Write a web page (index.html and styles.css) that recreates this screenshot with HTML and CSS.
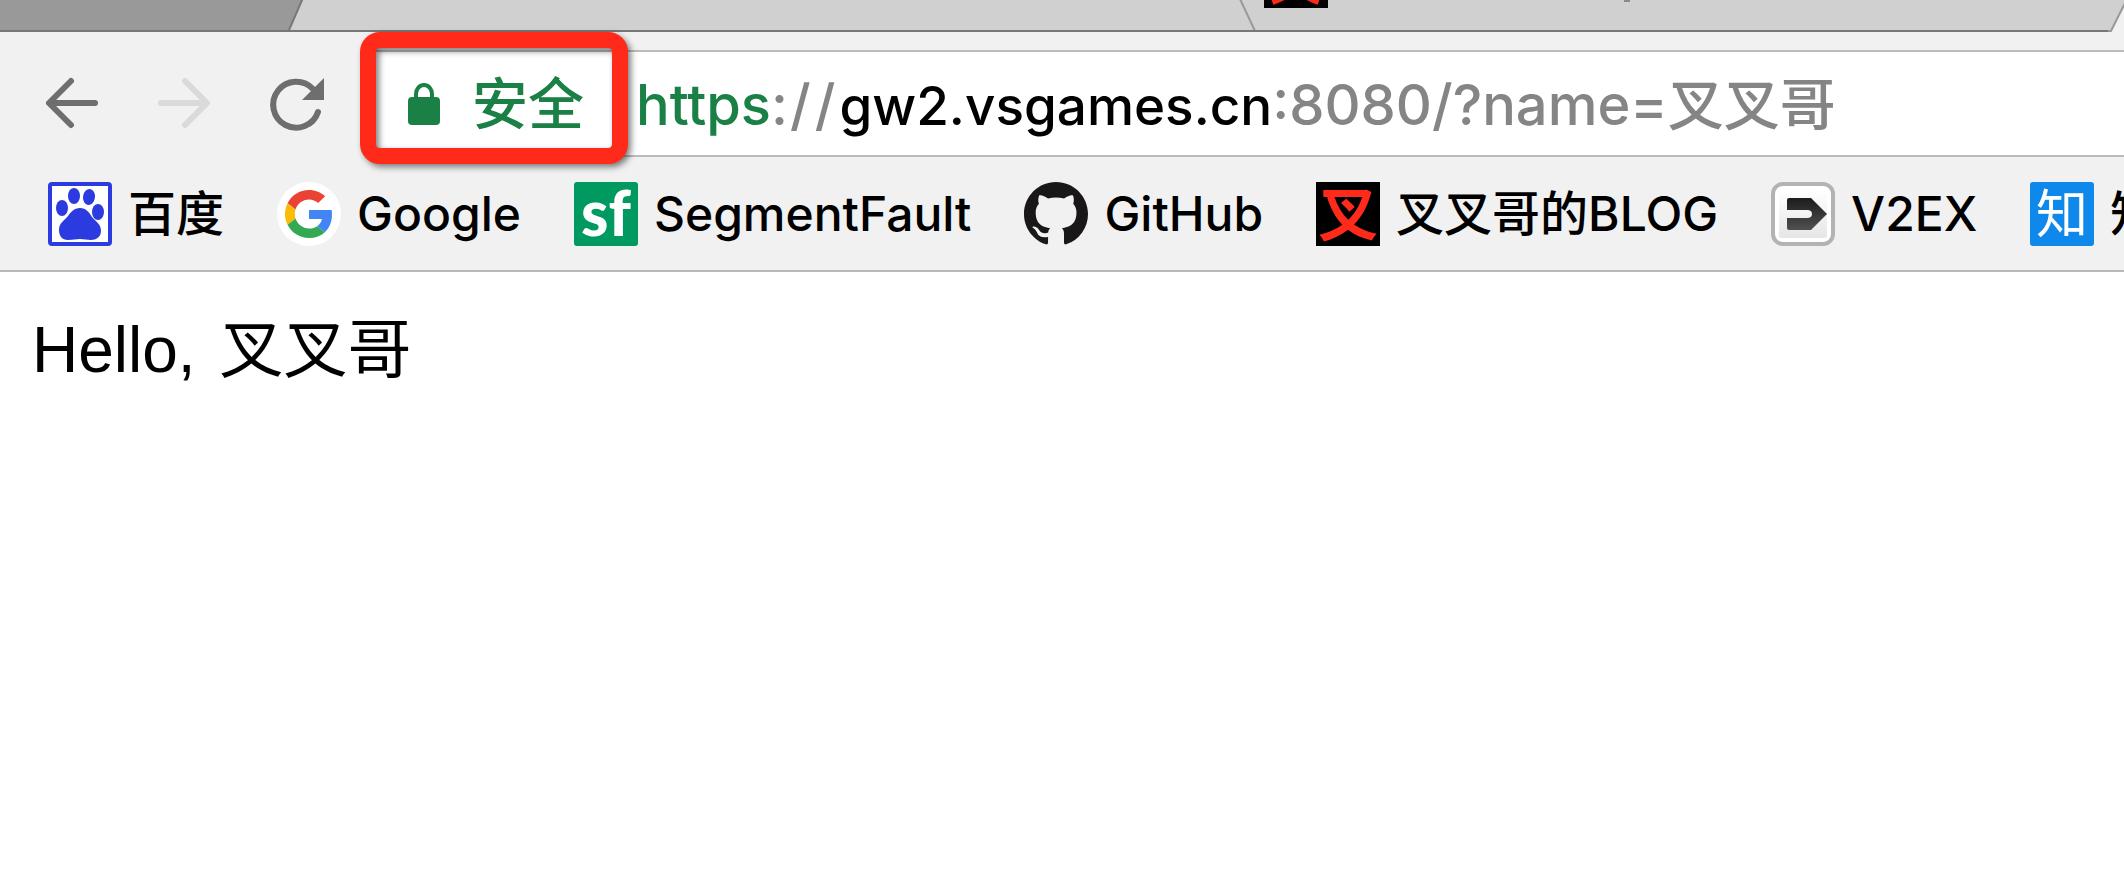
FILE: index.html
```html
<!DOCTYPE html>
<html lang="zh-CN">
<head>
<meta charset="utf-8">
<title>Hello, 叉叉哥</title>
<link rel="stylesheet" href="styles.css">
</head>
<body>
<header class="browser">
  <div class="tabs">
    <div class="tab tab-dark"></div>
    <svg class="edge" width="16" height="32" viewBox="0 0 16 32" aria-hidden="true"><path d="M0 0H14L1 30H0z" fill="#999"/><path d="M14.500 -1L1 30" stroke="#777" stroke-width="2"/><path d="M0 31H16" stroke="#777" stroke-width="2"/></svg>
    <div class="tab tab-middle"></div>
    <svg class="edge" width="16" height="32" viewBox="0 0 16 32" aria-hidden="true"><path d="M0 -1L15 31" stroke="#999" stroke-width="2"/><path d="M0 31H16" stroke="#777" stroke-width="2"/></svg>
    <div class="tab tab-last">
      <svg class="icon" viewBox="0 0 64 64" aria-hidden="true"><path fill="#000" d="M0 0h64v64H0z"/><path d="M8 57Q34 48 46 26M55 57Q28 48 17 20" stroke="#ff2a1a" stroke-width="8" fill="none"/></svg>
      <span class="tab-title"></span>
    </div>
    <svg class="edge" width="16" height="32" viewBox="0 0 16 32" aria-hidden="true"><path d="M16 4V32H3z" fill="#f1f1f1"/><path d="M17 3L3 31H0" stroke="#999" stroke-width="2" fill="none"/></svg>
  </div>

  <div class="toolbar">
    <nav class="nav">
      <button class="nav-btn" aria-label="后退"><svg width="56" height="56" viewBox="0 0 56 56"><path d="M27 5L5 27l22 22M6 27h45" fill="none" stroke="#6e6e6e" stroke-width="6" stroke-linecap="round" stroke-linejoin="round"/></svg></button>
      <button class="nav-btn" aria-label="前进" disabled><svg width="56" height="56" viewBox="0 0 56 56"><path d="M29 5l22 22-22 22M50 27H5" fill="none" stroke="#dadada" stroke-width="6" stroke-linecap="round" stroke-linejoin="round"/></svg></button>
      <button class="nav-btn" aria-label="重新加载"><svg width="56" height="56" viewBox="0 0 56 56"><path d="M50 36A23 23 0 1 1 45 13" fill="none" stroke="#6e6e6e" stroke-width="6" stroke-linecap="round"/><path d="M56 2v22H34z" fill="#6e6e6e"/></svg></button>
    </nav>
    <div class="omnibox">
      <button class="secure">
        <svg width="32" height="42" viewBox="0 0 32 42" aria-hidden="true"><rect y="14" width="32" height="28" rx="4" fill="#1a8045"/><path d="M8 16v-5a8 9 0 0 1 16 0v5" fill="none" stroke="#1a8045" stroke-width="4"/></svg>
        <span>安全</span>
      </button>
      <div class="url" role="textbox" aria-label="地址" contenteditable="true" spellcheck="false"><span class="scheme">https</span>:<span class="slash">/</span><span class="slash">/</span><span class="host">gw2.vsgames.cn</span>:8080/?name=叉叉哥</div>
    </div>
  </div>

  <nav class="bookmarks">
    <a class="bookmark" href="#baidu">
      <svg class="icon" viewBox="0 0 64 64" aria-hidden="true"><rect x="2" y="2" width="60" height="60" rx="2" fill="#fff" stroke="#2b3be0" stroke-width="4"/><g fill="#2b3be0"><ellipse cx="14" cy="26" rx="6" ry="8"/><ellipse cx="26" cy="14" rx="6" ry="8"/><ellipse cx="41" cy="15" rx="6" ry="8" transform="rotate(8 41 15)"/><ellipse cx="50" cy="30" rx="6" ry="8"/><path d="M32 26c6 0 9 4 12 9 4 5 9 7 9 14 0 6-5 9-10 9-4 0-7-1-11-1s-7 1-12 1c-6 0-9-4-9-10 0-7 5-9 9-14 3-4 6-8 12-8z"/></g></svg>
      <span>百度</span>
    </a>
    <a class="bookmark" href="#google">
      <svg class="icon" viewBox="0 0 64 64" aria-hidden="true"><circle cx="32" cy="32" r="32" fill="#fff"/><g transform="translate(8 8)"><path fill="#ea4335" d="M24 9.500c3.540 0 6.710 1.220 9.210 3.600l6.850-6.850C35.900 2.380 30.470 0 24 0 14.620 0 6.510 5.380 2.560 13.220l7.980 6.190C12.430 13.720 17.740 9.500 24 9.500z"/><path fill="#4285f4" d="M46.980 24.550c0-1.570-.15-3.090-.38-4.550H24v9.020h12.940c-.58 2.960-2.260 5.480-4.780 7.180l7.730 6c4.510-4.180 7.090-10.360 7.090-17.650z"/><path fill="#fbbc05" d="M10.530 28.590c-.48-1.450-.76-2.990-.76-4.590s.27-3.140.76-4.590l-7.980-6.190C.92 16.460 0 20.120 0 24c0 3.880.92 7.540 2.560 10.780l7.970-6.190z"/><path fill="#34a853" d="M24 48c6.480 0 11.930-2.130 15.890-5.810l-7.730-6c-2.150 1.450-4.920 2.300-8.160 2.300-6.260 0-11.570-4.220-13.470-9.910l-7.980 6.190C6.510 42.620 14.620 48 24 48z"/></g></svg>
      <span>Google</span>
    </a>
    <a class="bookmark" href="#segmentfault">
      <svg class="icon" viewBox="0 0 64 64" aria-hidden="true"><rect width="64" height="64" rx="3" fill="#009a61"/><text class="logo-sf" x="32" y="54">sf</text></svg>
      <span>SegmentFault</span>
    </a>
    <a class="bookmark" href="#github">
      <svg class="icon" viewBox="0 0 16 16" aria-hidden="true"><path fill="#191717" d="M8 0C3.580 0 0 3.580 0 8c0 3.540 2.290 6.530 5.470 7.590.4.070.55-.17.55-.38 0-.19-.01-.82-.01-1.490-2.010.37-2.530-.49-2.690-.94-.09-.23-.48-.94-.82-1.130-.28-.15-.68-.52-.01-.53.63-.01 1.080.58 1.230.82.72 1.210 1.870.87 2.330.66.070-.52.28-.87.51-1.070-1.780-.2-3.640-.89-3.640-3.950 0-.87.31-1.590.82-2.150-.08-.2-.36-1.020.08-2.120 0 0 .67-.21 2.200.82.64-.18 1.320-.27 2-.27s1.360.09 2 .27c1.530-1.040 2.200-.82 2.200-.82.44 1.100.16 1.920.08 2.120.51.56.82 1.270.82 2.150 0 3.070-1.870 3.750-3.650 3.950.29.25.54.73.54 1.480 0 1.070-.01 1.930-.01 2.200 0 .21.15.46.55.38A8.010 8.010 0 0 0 16 8c0-4.420-3.580-8-8-8z"/></svg>
      <span>GitHub</span>
    </a>
    <a class="bookmark" href="#blog">
      <svg class="icon" viewBox="0 0 64 64" aria-hidden="true"><path d="M0 0h64v64H0z"/><text class="logo-cha" x="32" y="54">叉</text></svg>
      <span>叉叉哥的BLOG</span>
    </a>
    <a class="bookmark" href="#v2ex">
      <svg class="icon" viewBox="0 0 64 64" aria-hidden="true"><defs><linearGradient id="tile" x2="0" y2="1"><stop stop-color="#fff"/><stop offset="1" stop-color="#e6e6e6"/></linearGradient><linearGradient id="arrow" x2="0" y2="1"><stop stop-color="#1c1c1c"/><stop offset="1" stop-color="#505050"/></linearGradient></defs><rect x="2" y="2" width="60" height="60" rx="10" fill="#fff" stroke="#b3b3b3" stroke-width="4"/><rect x="8" y="8" width="48" height="48" rx="2" fill="url(#tile)"/><path d="M18 16h22l16 16-16 16H18q-2 0-2-2V36h20q5 0 5-4t-5-4H16V18q0-2 2-2z" fill="url(#arrow)"/></svg>
      <span>V2EX</span>
    </a>
    <a class="bookmark" href="#zhihu">
      <svg class="icon" viewBox="0 0 64 64" aria-hidden="true"><rect width="64" height="64" rx="3" fill="#0f88eb"/><text class="logo-zhi" x="32" y="51">知</text></svg>
      <span>知乎</span>
    </a>
  </nav>
</header>
<main class="page">Hello, <span class="name">叉叉哥</span></main>
</body>
</html>
```
FILE: styles.css
```css
* { box-sizing: border-box; }

body {
  margin: 0;
  background: #fff;
  color: #000;
  overflow-x: hidden;
  font-family: Inter, "Noto Sans CJK SC", sans-serif;
}

button {
  border: 0;
  padding: 0;
  background: none;
  font: inherit;
}

svg { display: block; flex: none; overflow: visible; }

.browser { background: #f1f1f1; }

.tabs {
  display: flex;
  height: 32px;
  background: #d0d0d0;
  overflow: hidden;
}

.tab { border-bottom: 2px solid #777; }
.tab-dark { width: 288px; background: #999; }
.tab-middle { width: 936px; }

.tab-last {
  flex: 1;
  display: flex;
  align-items: flex-end;
  padding: 0 0 22px 8px;
}

.tab-title {
  align-self: flex-start;
  width: 6px;
  height: 2px;
  margin-left: 296px;
  background: #8a8a8a;
}

.toolbar {
  display: flex;
  align-items: center;
  padding-top: 18px;
}

.nav {
  display: flex;
  gap: 56px;
  padding: 0 44px;
}

.omnibox {
  flex: 1;
  display: flex;
  align-items: center;
  height: 107px;
  border: solid #bbb;
  border-width: 2px 0 2px 2px;
  border-radius: 8px 0 0 8px;
  background: #fff;
  font-size: 56px;
  font-weight: 500;
  line-height: 64px;
  white-space: nowrap;
}

.secure {
  position: relative;
  display: flex;
  align-items: center;
  gap: 32px;
  padding: 0 52px 0 38px;
  color: #1a8045;
}

.secure::after {
  content: "";
  position: absolute;
  inset: -40px 8px -28px -10px;
  border: 16px solid #ff2a1a;
  border-radius: 20px;
  filter: drop-shadow(3px 3px 3px rgba(0, 0, 0, 0.5));
}

.url { padding-top: 4px; color: #858585; outline: 0; }
.scheme { color: #1a8045; }
.slash { padding: 0 2px; }
.host { padding-left: 2px; color: #000; font-size: 53px; }

.bookmarks {
  display: flex;
  gap: 53px;
  padding: 25px 0 24px 48px;
  border-bottom: 2px solid #b9b9bc;
  overflow: hidden;
  font-size: 48px;
  font-weight: 500;
  line-height: 64px;
  white-space: nowrap;
}

.bookmark {
  display: flex;
  flex: none;
  gap: 16px;
  color: #000;
  text-decoration: none;
}

.icon { width: 64px; height: 64px; }

.logo-sf { font: 900 62px Lato, sans-serif; fill: #fff; text-anchor: middle; }
.logo-cha { font: 700 60px "Noto Sans CJK SC", sans-serif; fill: #ff2a1a; text-anchor: middle; }
.logo-zhi { font: 400 52px "Noto Sans CJK SC", sans-serif; fill: #fff; text-anchor: middle; }

.page {
  padding: 32px;
  font: 64px/92px "Liberation Sans", "Noto Sans CJK SC", sans-serif;
}

.name { margin-left: 6px; }
```
